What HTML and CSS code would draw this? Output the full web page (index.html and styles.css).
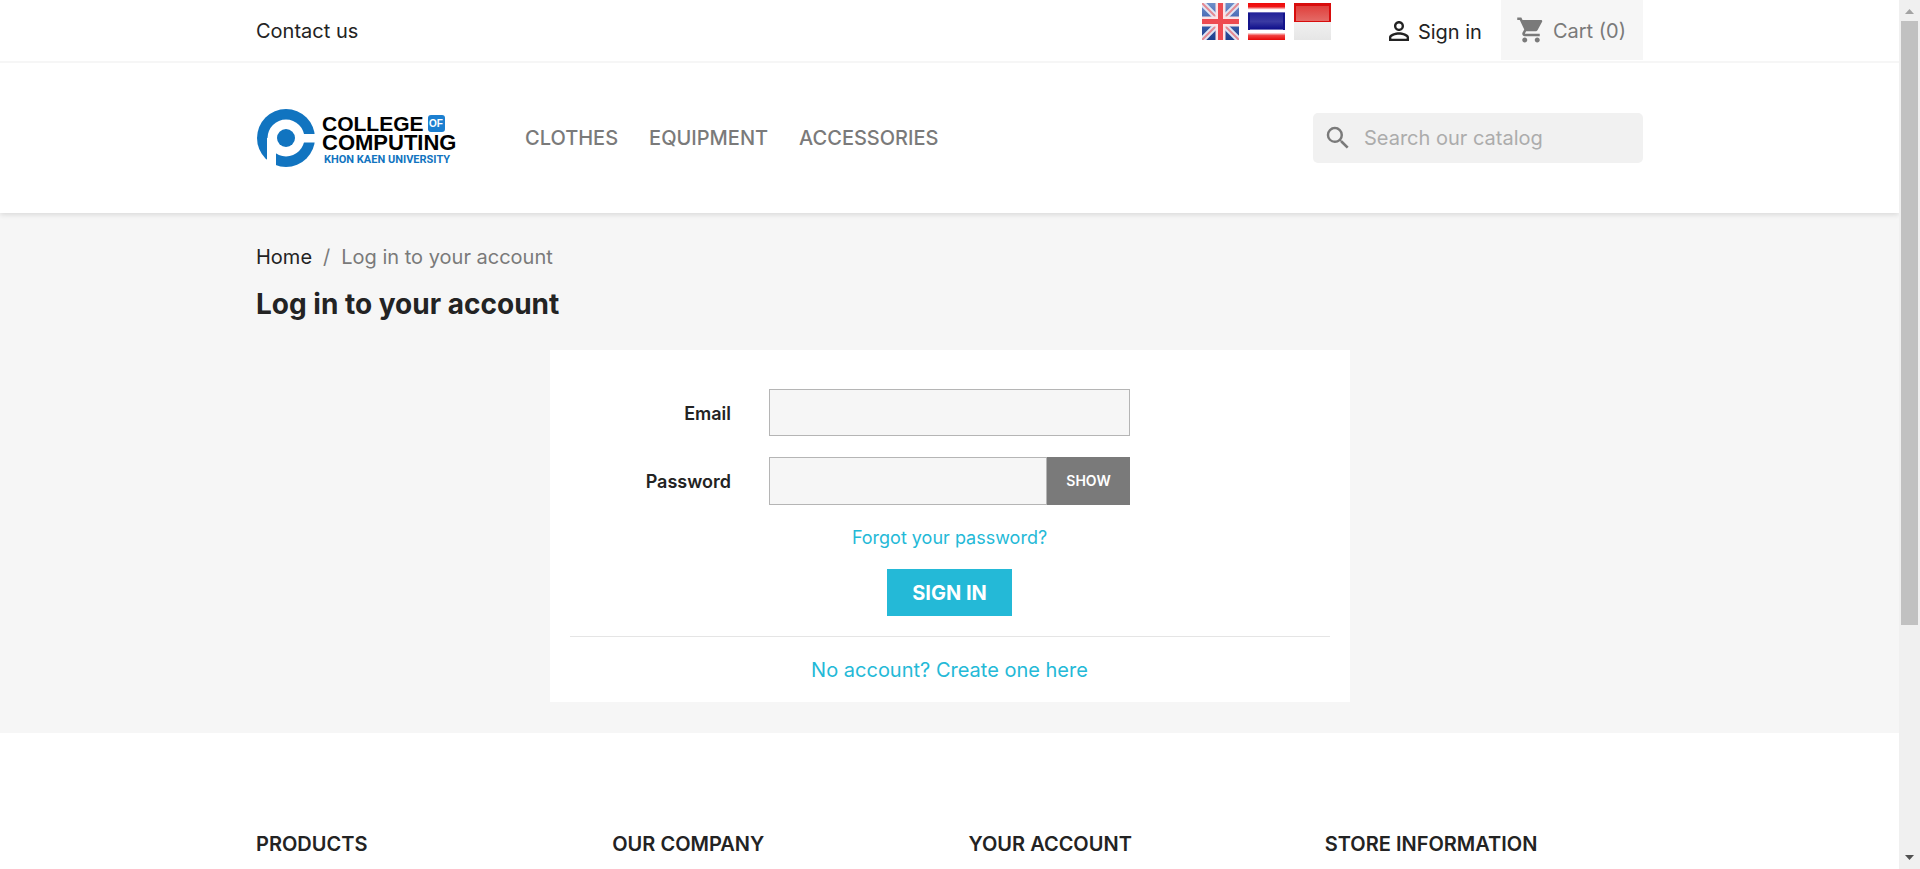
FILE: index.html
```html
<!DOCTYPE html>
<html lang="en">
<head>
<meta charset="utf-8">
<title>Log in to your account</title>
<link rel="stylesheet" href="styles.css">
</head>
<body>
<div class="page">
  <header class="header">
    <nav class="topbar">
      <div class="container topbar-row">
        <a class="contact" href="#">Contact us</a>
        <div class="topbar-right">
          <div class="flags">
            <a href="#" aria-label="English"><svg class="flag" viewBox="0 0 37 37">
              <defs><linearGradient id="navy" x1="0" y1="0" x2="0" y2="1"><stop offset="0" stop-color="#6f8fc9"/><stop offset=".5" stop-color="#3f62b0"/><stop offset="1" stop-color="#1d3f8c"/></linearGradient></defs>
              <rect width="37" height="37" fill="url(#navy)"/>
              <path d="M0 0L37 37M37 0L0 37" stroke="#dfe5f4" stroke-width="6"/>
              <path d="M0 0L37 37M37 0L0 37" stroke="#e58a92" stroke-width="2"/>
              <path d="M18.500 0V37M0 18.500H37" stroke="#fbe4e6" stroke-width="10"/>
              <path d="M18.500 0V37M0 18.500H37" stroke="#ee4a50" stroke-width="5"/>
            </svg></a>
            <a href="#" aria-label="Thai"><svg class="flag" viewBox="0 0 37 37">
              <defs><linearGradient id="thai" x1="0" y1="0" x2="0" y2="1"><stop offset="0" stop-color="#f00a0a"/><stop offset=".1" stop-color="#ee1515"/><stop offset=".18" stop-color="#fff"/><stop offset=".23" stop-color="#fff"/><stop offset=".27" stop-color="#23239a"/><stop offset=".5" stop-color="#3a3aa2"/><stop offset=".7" stop-color="#10108c"/><stop offset=".74" stop-color="#fff"/><stop offset=".8" stop-color="#fff"/><stop offset=".88" stop-color="#f04040"/><stop offset="1" stop-color="#e80808"/></linearGradient></defs>
              <rect width="37" height="37" fill="url(#thai)"/>
              <path d="M1 10V27M36 10V27" stroke="#14148c" stroke-width="2"/>
            </svg></a>
            <a href="#" aria-label="Indonesian"><svg class="flag" viewBox="0 0 37 37">
              <defs>
                <linearGradient id="white" x1="0" y1="0" x2="0" y2="1"><stop offset="0" stop-color="#fafafa"/><stop offset="1" stop-color="#e6e6e6"/></linearGradient>
                <linearGradient id="red" x1="0" y1="0" x2="0" y2="1"><stop offset="0" stop-color="#e0403c"/><stop offset="1" stop-color="#e46a66"/></linearGradient>
              </defs>
              <rect width="37" height="37" fill="url(#white)"/>
              <rect width="37" height="19" fill="#d80c0c"/>
              <rect x="2" y="3" width="33" height="15" fill="url(#red)"/>
            </svg></a>
          </div>
          <a class="signin" href="#"><svg class="icon" viewBox="0 0 24 24"><path fill="currentColor" d="M12 5.900a2.100 2.100 0 1 1 0 4.200 2.100 2.100 0 0 1 0-4.200m0 9c2.970 0 6.100 1.460 6.100 2.100v1.100H5.900V17c0-.64 3.130-2.100 6.100-2.100M12 4C9.790 4 8 5.790 8 8s1.790 4 4 4 4-1.790 4-4-1.790-4-4-4zm0 9c-2.670 0-8 1.340-8 4v3h16v-3c0-2.660-5.330-4-8-4z"/></svg><span>Sign in</span></a>
          <a class="cart" href="#"><svg class="icon" viewBox="0 0 24 24"><path fill="currentColor" d="M7 18c-1.100 0-1.990.9-1.990 2S5.900 22 7 22s2-.9 2-2-.9-2-2-2zM1 2v2h2l3.600 7.590-1.350 2.450c-.16.28-.25.61-.25.960 0 1.100.9 2 2 2h12v-2H7.420c-.14 0-.25-.11-.25-.25l.03-.12.900-1.630h7.450c.75 0 1.410-.41 1.750-1.030l3.580-6.490c.08-.14.12-.31.12-.48 0-.55-.45-1-1-1H5.210l-.94-2H1zm16 16c-1.100 0-1.990.9-1.990 2s.89 2 1.990 2 2-.9 2-2-.9-2-2-2z"/></svg><span>Cart (0)</span></a>
        </div>
      </div>
    </nav>
    <div class="container header-row">
      <a class="logo" href="#" aria-label="College of Computing, Khon Kaen University"><svg viewBox="0 0 200 60">
        <circle cx="30" cy="30" r="29" fill="#1174c0"/>
        <circle cx="30" cy="30" r="18.500" fill="#fff"/>
        <path d="M11 30H20V60H11zM46 26H60V34.500H46z" fill="#fff"/>
        <circle cx="30" cy="30" r="9" fill="#1174c0"/>
        <text class="logo-name" x="66" y="23" font-size="21">COLLEGE</text>
        <rect x="172" y="7" width="17" height="17" rx="3" fill="#1c7fd0"/>
        <text class="logo-of" x="180" y="19" font-size="10" text-anchor="middle">OF</text>
        <text class="logo-name" x="66" y="42" font-size="22">COMPUTING</text>
        <text class="logo-uni" x="68" y="55" font-size="11">KHON KAEN UNIVERSITY</text>
      </svg></a>
      <nav class="menu">
        <a href="#">CLOTHES</a>
        <a href="#">EQUIPMENT</a>
        <a href="#">ACCESSORIES</a>
      </nav>
      <form class="search">
        <svg class="icon" viewBox="0 0 24 24"><path fill="currentColor" d="M15.500 14h-.79l-.28-.27A6.471 6.471 0 0 0 16 9.500 6.500 6.500 0 1 0 9.500 16c1.610 0 3.090-.59 4.230-1.570l.27.28v.79l5 4.990L20.490 19l-4.990-5zm-6 0C7.010 14 5 11.990 5 9.500S7.010 5 9.500 5 14 7.010 14 9.500 11.990 14 9.500 14z"/></svg>
        <input type="text" placeholder="Search our catalog" aria-label="Search">
      </form>
    </div>
  </header>

  <main class="main">
    <div class="container">
      <nav class="breadcrumb"><a href="#">Home</a><span>/</span><span>Log in to your account</span></nav>
      <h1>Log in to your account</h1>
      <section class="card">
        <form class="login">
          <div class="field">
            <label for="email">Email</label>
            <input id="email" type="email">
          </div>
          <div class="field">
            <label for="password">Password</label>
            <div class="password">
              <input id="password" type="password">
              <button type="button">SHOW</button>
            </div>
          </div>
          <a class="forgot" href="#">Forgot your password?</a>
          <button class="submit" type="submit">SIGN IN</button>
        </form>
        <hr>
        <a class="create" href="#">No account? Create one here</a>
      </section>
    </div>
  </main>

  <footer class="container footer">
    <h2>PRODUCTS</h2>
    <h2>OUR COMPANY</h2>
    <h2>YOUR ACCOUNT</h2>
    <h2>STORE INFORMATION</h2>
  </footer>
</div>
<div class="scrollbar" aria-hidden="true">
  <span class="arrow up"></span>
  <div class="track"><div class="thumb"></div></div>
  <span class="arrow down"></span>
</div>
</body>
</html>
```

FILE: styles.css
```css
* { box-sizing: border-box; }
body {
  margin: 0;
  display: flex;
  height: 100vh;
  overflow: hidden;
  background: #fff;
  color: #232323;
  font: 400 20px/24px Inter, "Liberation Sans", sans-serif;
}
a { color: inherit; text-decoration: none; }
input, button { font: inherit; border: 0; border-radius: 0; margin: 0; }
.page { flex: 1; min-width: 0; overflow: hidden; }
.container { max-width: 1425px; margin: 0 auto; padding: 0 19px; }
.icon { width: 30px; height: 30px; display: block; flex: none; }

.header { position: relative; background: #fff; box-shadow: 0 2px 5px rgba(0, 0, 0, .11); }
.topbar { border-bottom: 2px solid #f6f6f6; }
.topbar-row { display: flex; justify-content: space-between; height: 61px; }
.contact { padding-top: 19px; }
.topbar-right { display: flex; }
.flags { display: flex; gap: 9px; padding-top: 3px; margin-right: 53px; }
.flag { display: block; width: 37px; height: 37px; }
.signin { display: flex; align-items: center; gap: 4px; margin-right: 19px; }
.cart { display: flex; align-items: center; gap: 7px; height: 60px; padding: 0 17px 0 15px; background: #f6f6f6; color: #7a7a7a; }
.signin span, .cart span { padding-top: 2px; }
.header-row { display: flex; align-items: center; height: 150px; }
.logo { width: 200px; }
.logo svg { display: block; width: 200px; height: 60px; }
.logo-name { font-family: "Liberation Sans", sans-serif; font-weight: 700; fill: #000; }
.logo-of { font-family: "Liberation Sans", sans-serif; font-weight: 700; fill: #fff; }
.logo-uni { font-family: Roboto, sans-serif; font-weight: 700; fill: #1174c0; }
.menu { display: flex; gap: 31px; margin-left: 69px; font-weight: 500; color: #7a7a7a; }
.search { display: flex; align-items: center; gap: 11px; width: 330px; height: 50px; margin-left: auto; padding: 0 10px; border-radius: 5px; background: #f1f1f1; color: #7a7a7a; }
.search input { flex: 1; min-width: 0; padding: 0; background: none; outline: 0; }
.search input::placeholder { color: #acacac; opacity: 1; }

.main { background: #f6f6f6; padding: 32px 0 31px; }
.breadcrumb { display: flex; gap: 11px; color: #7a7a7a; }
.breadcrumb a { color: #232323; }
h1 { margin: 18px 0 28px; font-size: 28px; line-height: 35px; font-weight: 700; }
.card { max-width: 800px; margin: 0 auto; padding: 39px 20px 20px; background: #fff; text-align: center; }
.login { display: flex; flex-direction: column; align-items: center; }
.field { display: grid; grid-template-columns: 161px 361px 161px; gap: 38px; align-items: center; margin-bottom: 21px; }
.field label { padding-top: 2px; text-align: right; font-size: 18px; font-weight: 600; }
.field input { width: 100%; height: 47px; padding: 0 12px; border: 1px solid #b5b5b5; background: #f6f6f6; }
.password { display: flex; }
.password button { flex: none; width: 83px; height: 48px; background: #7a7a7a; color: #fff; font-size: 14px; font-weight: 600; }
.field .password input { flex: 1; min-width: 0; height: 48px; }
.forgot { font-size: 18px; color: #24b9d7; }
.submit { height: 47px; padding: 0 25px; margin-top: 19px; background: #24b9d7; color: #fff; font-weight: 700; }
hr { margin: 20px 0 21px; border: 0; border-top: 1px solid #e5e5e5; }
.create { display: block; color: #24b9d7; }

.footer { display: grid; grid-template-columns: repeat(4, 1fr); gap: 38px; padding-top: 99px; }
.footer h2 { margin: 0; font-size: 20px; line-height: 24px; font-weight: 600; white-space: nowrap; }

.scrollbar { display: flex; flex-direction: column; align-items: center; width: 21px; background: #f0f0f0; padding: 9px 0; }
.arrow { width: 9px; height: 5px; background: #a3a3a3; }
.up { clip-path: polygon(50% 0, 100% 100%, 0 100%); }
.down { background: #505050; clip-path: polygon(0 0, 100% 0, 50% 100%); }
.track { flex: 1; width: 17px; padding: 7px 0; }
.thumb { height: 73%; background: #c1c1c1; }
```
